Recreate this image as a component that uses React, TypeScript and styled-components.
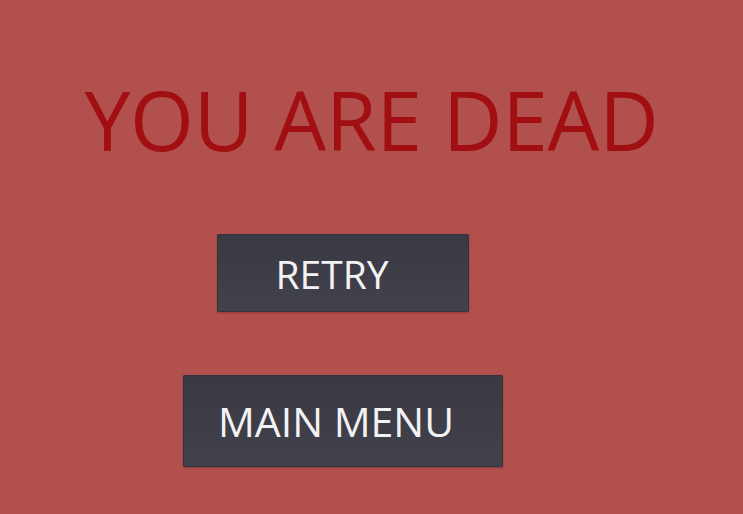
import React from "react"
import styled, { createGlobalStyle } from "styled-components"

const GlobalStyle = createGlobalStyle`
  html, body {
    margin: 0;
    padding: 0;
    background: #b2504e;
  }
  body {
    font-family: "Open Sans", "Noto Sans", sans-serif;
  }
`

const Screen = styled.div`
  width: 743px;
  height: 514px;
  display: flex;
  flex-direction: column;
  align-items: center;
  overflow: hidden;
`

const Title = styled.h1`
  margin: 78px 0 0 0;
  font-size: 82px;
  font-weight: 400;
  line-height: 1;
  color: #a10f12;
  letter-spacing: -0.2px;
`

const Menu = styled.div`
  align-self: stretch;
  padding-right: 57px;
  display: flex;
  flex-direction: column;
  align-items: center;
`

const MenuButton = styled.button<{
  $w: number
  $h: number
  $shift: number
  $top: number
  $size: number
}>`
  width: ${p => p.$w}px;
  height: ${p => p.$h}px;
  margin-top: ${p => p.$top}px;
  padding: 0 ${p => p.$shift}px 0 0;
  border: 1px solid #34343d;
  border-radius: 1px;
  background: linear-gradient(#393944, #42424c);
  color: #f2f2f4;
  font-family: "Open Sans", "Noto Sans", sans-serif;
  font-size: ${p => p.$size}px;
  line-height: 1;
  display: flex;
  align-items: center;
  justify-content: center;
  box-shadow: 0 1px 2px rgba(90, 20, 20, 0.35);
`

export default function App() {
  return (
    <>
      <GlobalStyle />
      <Screen>
        <Title>YOU ARE DEAD</Title>
        <Menu>
          <MenuButton $w={252} $h={78} $shift={22} $top={74} $size={39}>
            RETRY
          </MenuButton>
          <MenuButton $w={320} $h={92} $shift={14} $top={63} $size={41}>
            MAIN MENU
          </MenuButton>
        </Menu>
      </Screen>
    </>
  )
}
